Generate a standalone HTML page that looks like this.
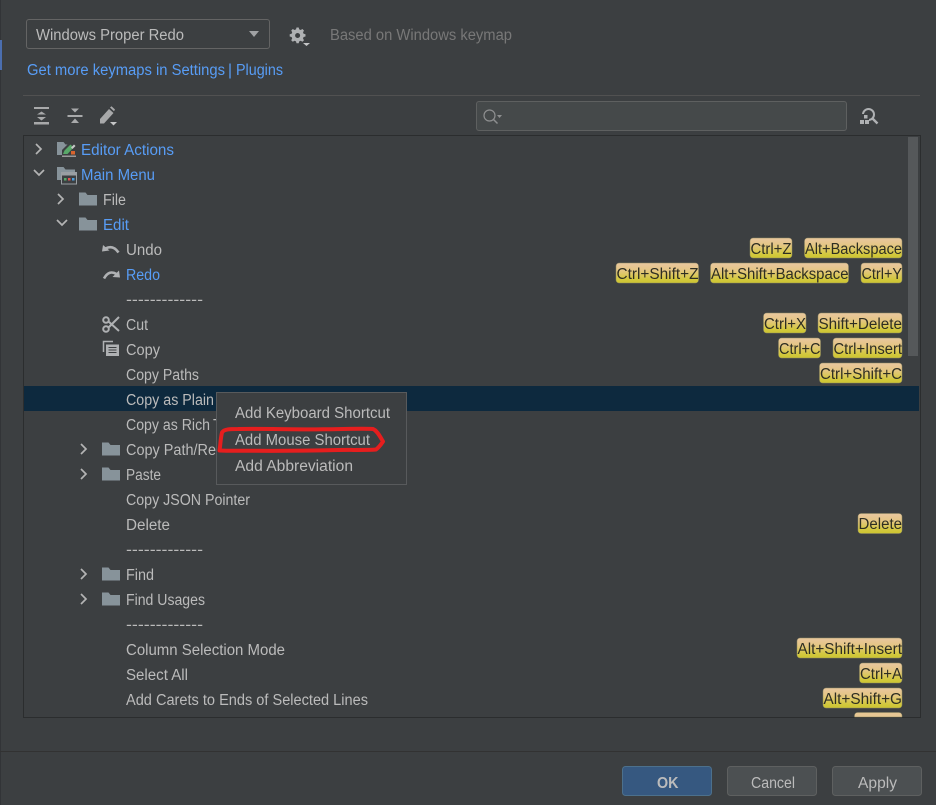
<!DOCTYPE html>
<html><head><meta charset="utf-8"><style>
html,body{margin:0;padding:0;background:#3c3f41;overflow:hidden}
svg{display:block}
text{font-family:"Liberation Sans",sans-serif;font-size:15.5px;fill:#bbbbbb}
.l{fill:#589df6}
.k{fill:#2e2e22;font-size:15.5px}
.g{fill:#787878}
.f{fill:#87939a}
.i{fill:#afb1b3}
</style></head><body>
<svg width="936" height="805" viewBox="0 0 936 805" xmlns="http://www.w3.org/2000/svg">
<defs>
<linearGradient id="b" x1="0" y1="0" x2="0" y2="1"><stop offset="0" stop-color="#e9c7a0"/><stop offset=".35" stop-color="#e5c685"/><stop offset=".8" stop-color="#d3c83f"/><stop offset="1" stop-color="#cdc52f"/></linearGradient>
<path id="fo" d="M0 1h6.500l2 2.500H18V14H0z"/>
<path id="ch" d="M0 0l5 5-5 5" fill="none" stroke="#b4b4b4" stroke-width="1.700"/>
<path id="cd" d="M0 0l5 5 5-5" fill="none" stroke="#b4b4b4" stroke-width="1.700"/>
</defs>
<rect width="936" height="805" fill="#3c3f41"/>
<rect x="0" y="0" width="1" height="805" fill="#323437"/>
<rect x="0" y="40" width="2" height="30" fill="#4b6eaf"/>

<rect x="26.500" y="19.500" width="243" height="29" rx="2.500" fill="#3c3f41" stroke="#646464"/>
<text x="36" y="40" textLength="148" lengthAdjust="spacingAndGlyphs">Windows Proper Redo</text>
<path d="M249 31h10l-5 6z" fill="#a0a2a4"/>
<path d="M296.500 27.500h2.200l.5 1.900 1.500.6 1.700-1 1.600 1.600-1 1.700.6 1.500 1.900.5v2.200l-1.900.5-.6 1.500 1 1.700-1.600 1.600-1.700-1-1.500.6-.5 1.900h-2.200l-.5-1.900-1.500-.6-1.700 1-1.600-1.600 1-1.700-.6-1.500-1.900-.5v-2.200l1.900-.5.6-1.500-1-1.700 1.600-1.600 1.700 1 1.500-.6zm1.100 5.500a2.500 2.500 0 1 0 .01 0z" fill="#afb1b3" fill-rule="evenodd"/>
<path d="M303 43h7l-3.500 3z" fill="#c5c6c7"/>
<text x="330" y="40" class="g" textLength="182" lengthAdjust="spacingAndGlyphs">Based on Windows keymap</text>
<text x="27" y="75" class="l" textLength="198" lengthAdjust="spacingAndGlyphs">Get more keymaps in Settings</text>
<text x="228" y="75" class="l">|</text>
<text x="236" y="75" class="l" textLength="47" lengthAdjust="spacingAndGlyphs">Plugins</text>
<rect x="23" y="95" width="897" height="1" fill="#515151"/>

<g fill="#a8a9aa">
<rect x="34" y="107" width="15" height="2"/><rect x="34" y="122" width="15" height="2.500"/>
<path d="M37 114.500h9l-4.500-3zM37 117h9l-4.500 3.500z"/>
<rect x="67.500" y="115" width="15" height="2"/>
<path d="M71 108.500h8l-4 4zM71 123h8l-4-4.500z"/>
<path d="M100 123.500l0-4.500 9-10 4.500 4-9.500 10.500zM110 107.500l1.500-1.200 3.500 3.200-1 1.700z"/>
<path d="M110 122h7l-3.500 3.500z" fill="#c5c6c7"/>
</g>

<rect x="476.500" y="101.500" width="370" height="29" rx="2.500" fill="#45494a" stroke="#5e6060"/>
<circle cx="489.500" cy="115.500" r="5.500" fill="none" stroke="#8e8f90" stroke-width="1.200"/>
<path d="M493.500 119.500l4 4" stroke="#8e8f90" stroke-width="1.500"/>
<path d="M497 115h5l-2.500 3z" fill="#8e8f90"/>
<circle cx="868.500" cy="114.500" r="5.500" fill="none" stroke="#afb1b3" stroke-width="2"/>
<path d="M872.500 118.500l5 5" stroke="#afb1b3" stroke-width="2.400"/>
<rect x="859" y="114" width="10" height="11" fill="#3c3f41"/>
<g fill="#afb1b3"><rect x="860" y="120" width="4" height="4"/><rect x="865" y="120" width="4" height="4"/><rect x="864" y="115" width="3.500" height="3.500"/></g>

<rect x="23.500" y="135.500" width="897" height="582" fill="#3c3f41" stroke="#2b2d2e"/>
<rect x="24" y="386" width="895" height="25" fill="#0d293e"/>
<rect x="908" y="137" width="10" height="219" fill="#55585a"/>

<!-- tree icons -->
<use href="#ch" x="36" y="144"/>
<use href="#cd" x="34" y="170"/>
<use href="#ch" x="58" y="194"/>
<use href="#cd" x="57" y="220"/>
<use href="#ch" x="81" y="444"/>
<use href="#ch" x="81" y="469"/>
<use href="#ch" x="81" y="569"/>
<use href="#ch" x="81" y="594"/>

<use href="#fo" x="57" y="141" class="f"/>
<path d="M62 150l9-9 6 0v17H62z" fill="#3c3f41"/>
<rect x="62" y="155.500" width="14" height="1.500" fill="#9a9a9a"/>
<path d="M63 154l1.500-3.500 6-6 3 3-6 6.500z" fill="#59a869"/>
<path d="M71 147.500l3-3 1.500 1.500-3 3z" fill="#c8c8c8"/>
<path d="M71 151h4v3.500h-4z" fill="#d9642e"/>

<use href="#fo" x="57" y="166" class="f"/>
<rect x="61.500" y="172.500" width="15" height="11.500" fill="#3c3f41" stroke="#9a9fa3"/>
<rect x="62" y="173" width="14" height="2.500" fill="#9a9fa3"/>
<rect x="64" y="178" width="2.500" height="2.500" fill="#59a869"/><rect x="68" y="178" width="2.500" height="2.500" fill="#e05555"/><rect x="72" y="178" width="2.500" height="2.500" fill="#4a9fe0"/>

<use href="#fo" x="79" y="191.500" class="f"/>
<use href="#fo" x="79" y="216.500" class="f"/>
<use href="#fo" x="102" y="441.500" class="f"/>
<use href="#fo" x="102" y="466.500" class="f"/>
<use href="#fo" x="102" y="566.500" class="f"/>
<use href="#fo" x="102" y="591.500" class="f"/>

<!-- undo / redo -->
<path d="M102 251.500l1-6.500 6.500 5.500z" class="i"/>
<path d="M105.500 248.500Q113 244.500 118.500 252.500" fill="none" stroke="#afb1b3" stroke-width="2.600"/>
<path d="M120 277.500l-1-7-6.500 6.500z" class="i"/>
<path d="M116.500 274Q109 269.500 104 278.500" fill="none" stroke="#afb1b3" stroke-width="2.600"/>
<!-- scissors -->
<g fill="none" stroke="#afb1b3" stroke-width="2"><circle cx="106" cy="320" r="2.800"/><circle cx="106" cy="329" r="2.800"/><path d="M108.500 321.500L119 331M108.500 327.500L119 317"/></g>
<!-- copy -->
<path d="M103.500 352v-10.500H113" fill="none" stroke="#afb1b3" stroke-width="1.500"/>
<path d="M106 344.500h13v11.500h-13z" fill="#afb1b3"/>
<path d="M108.500 347.500h8M108.500 350h8M108.500 352.500h8" stroke="#3c3f41" stroke-width="1"/>

<!-- labels -->
<text x="81" y="155" class="l" textLength="93" lengthAdjust="spacingAndGlyphs">Editor Actions</text>
<text x="81" y="180" class="l" textLength="74" lengthAdjust="spacingAndGlyphs">Main Menu</text>
<text x="103" y="205" textLength="23" lengthAdjust="spacingAndGlyphs">File</text>
<text x="103" y="230" class="l" textLength="26" lengthAdjust="spacingAndGlyphs">Edit</text>
<text x="126" y="255" textLength="36" lengthAdjust="spacingAndGlyphs">Undo</text>
<text x="126" y="280" class="l" textLength="34" lengthAdjust="spacingAndGlyphs">Redo</text>
<text x="126" y="304.500" textLength="77" lengthAdjust="spacingAndGlyphs">-------------</text>
<text x="126" y="330" textLength="22" lengthAdjust="spacingAndGlyphs">Cut</text>
<text x="126" y="355" textLength="34" lengthAdjust="spacingAndGlyphs">Copy</text>
<text x="126" y="380" textLength="73" lengthAdjust="spacingAndGlyphs">Copy Paths</text>
<text x="126" y="405" textLength="88" lengthAdjust="spacingAndGlyphs">Copy as Plain</text>
<text x="126" y="430" textLength="84" lengthAdjust="spacingAndGlyphs">Copy as Rich</text>
<text x="213" y="430">T</text>
<text x="126" y="455" textLength="90" lengthAdjust="spacingAndGlyphs">Copy Path/Re</text>
<text x="126" y="480" textLength="35" lengthAdjust="spacingAndGlyphs">Paste</text>
<text x="126" y="505" textLength="124" lengthAdjust="spacingAndGlyphs">Copy JSON Pointer</text>
<text x="126" y="530" textLength="44" lengthAdjust="spacingAndGlyphs">Delete</text>
<text x="126" y="554.500" textLength="77" lengthAdjust="spacingAndGlyphs">-------------</text>
<text x="126" y="580" textLength="28" lengthAdjust="spacingAndGlyphs">Find</text>
<text x="126" y="605" textLength="79" lengthAdjust="spacingAndGlyphs">Find Usages</text>
<text x="126" y="629.500" textLength="77" lengthAdjust="spacingAndGlyphs">-------------</text>
<text x="126" y="655" textLength="159" lengthAdjust="spacingAndGlyphs">Column Selection Mode</text>
<text x="126" y="680" textLength="62" lengthAdjust="spacingAndGlyphs">Select All</text>
<text x="126" y="705" textLength="242" lengthAdjust="spacingAndGlyphs">Add Carets to Ends of Selected Lines</text>

<!-- shortcuts -->
<g fill="url(#b)" stroke="#8f8a63" stroke-width=".5">
<rect x="750" y="238" width="42" height="20" rx="3"/>
<rect x="804.500" y="238" width="97.500" height="20" rx="3"/>
<rect x="616" y="263" width="82.500" height="20" rx="3"/>
<rect x="710.500" y="263" width="138" height="20" rx="3"/>
<rect x="861" y="263" width="41" height="20" rx="3"/>
<rect x="763.500" y="313" width="42.500" height="20" rx="3"/>
<rect x="818" y="313" width="84" height="20" rx="3"/>
<rect x="778.500" y="338" width="42" height="20" rx="3"/>
<rect x="833" y="338" width="69" height="20" rx="3"/>
<rect x="819.500" y="363" width="82.500" height="20" rx="3"/>
<rect x="858" y="513.500" width="44" height="20" rx="3"/>
<rect x="797" y="638" width="105" height="20" rx="3"/>
<rect x="859.500" y="663" width="42.500" height="20" rx="3"/>
<rect x="823" y="688" width="79" height="20" rx="3"/>
<path d="M854.500 717v-1.500a3 3 0 0 1 3-3h41.500a3 3 0 0 1 3 3V717z" fill="#e7c794"/>
</g>
<text class="k" x="750.500" y="254" textLength="41" lengthAdjust="spacingAndGlyphs">Ctrl+Z</text>
<text class="k" x="805" y="254" textLength="97" lengthAdjust="spacingAndGlyphs">Alt+Backspace</text>
<text class="k" x="616.500" y="279" textLength="82" lengthAdjust="spacingAndGlyphs">Ctrl+Shift+Z</text>
<text class="k" x="711" y="279" textLength="137.500" lengthAdjust="spacingAndGlyphs">Alt+Shift+Backspace</text>
<text class="k" x="861.500" y="279" textLength="40.500" lengthAdjust="spacingAndGlyphs">Ctrl+Y</text>
<text class="k" x="764" y="329" textLength="42" lengthAdjust="spacingAndGlyphs">Ctrl+X</text>
<text class="k" x="818.500" y="329" textLength="83.500" lengthAdjust="spacingAndGlyphs">Shift+Delete</text>
<text class="k" x="779" y="354" textLength="41.500" lengthAdjust="spacingAndGlyphs">Ctrl+C</text>
<text class="k" x="833.500" y="354" textLength="68.500" lengthAdjust="spacingAndGlyphs">Ctrl+Insert</text>
<text class="k" x="820" y="379" textLength="82" lengthAdjust="spacingAndGlyphs">Ctrl+Shift+C</text>
<text class="k" x="858.500" y="529" textLength="43.500" lengthAdjust="spacingAndGlyphs">Delete</text>
<text class="k" x="797.500" y="654" textLength="104.500" lengthAdjust="spacingAndGlyphs">Alt+Shift+Insert</text>
<text class="k" x="860" y="679" textLength="42" lengthAdjust="spacingAndGlyphs">Ctrl+A</text>
<text class="k" x="823.500" y="704" textLength="78.500" lengthAdjust="spacingAndGlyphs">Alt+Shift+G</text>

<!-- popup -->
<rect x="216.500" y="392.500" width="190" height="92" fill="#3c3f41" stroke="#585a5c"/>
<text x="235" y="418" textLength="155" lengthAdjust="spacingAndGlyphs">Add Keyboard Shortcut</text>
<text x="235" y="445" textLength="135" lengthAdjust="spacingAndGlyphs">Add Mouse Shortcut</text>
<text x="235" y="471" textLength="118" lengthAdjust="spacingAndGlyphs">Add Abbreviation</text>
<path d="M219.500 450.500c1-6 1-12 2.500-18 2-3.500 8-3.500 16-3.500 20-.5 55 .5 85 .3 18 0 36-1 50-.3 4 1.500 7 7.500 10 12.500-2 3-4 6-7 8-8 .7-24 .3-38 .5-30 .7-60 1-90 .7-10 0-18 .3-28-.2z" fill="none" stroke="#e61e1e" stroke-width="4" stroke-linejoin="round"/>

<!-- footer -->
<rect x="0" y="751" width="936" height="1" fill="#323232"/>
<rect x="622.500" y="766.500" width="89" height="29" rx="3" fill="#365880" stroke="#4c708c"/>
<text x="657" y="788" textLength="21.500" lengthAdjust="spacingAndGlyphs" style="font-weight:bold;fill:#bbbbbb">OK</text>
<rect x="727.500" y="766.500" width="89" height="29" rx="3" fill="#4c5052" stroke="#5e6060"/>
<text x="751" y="788" textLength="44" lengthAdjust="spacingAndGlyphs">Cancel</text>
<rect x="832.500" y="766.500" width="89" height="29" rx="3" fill="#4c5052" stroke="#5e6060"/>
<text x="858" y="788" textLength="39" lengthAdjust="spacingAndGlyphs">Apply</text>
</svg>
</body></html>
